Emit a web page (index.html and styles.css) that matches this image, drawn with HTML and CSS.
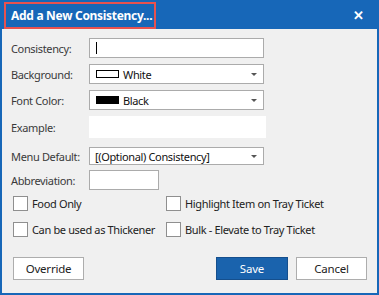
FILE: index.html
```html
<!DOCTYPE html>
<html lang="en">

<head>
    <meta charset="UTF-8">
    <title>Add a New Consistency</title>
    <link rel="stylesheet" href="styles.css">
</head>

<body>
    <div class="window">
        <div class="title-bar">
            <div class="title-text">Add a New Consistency...</div>
            <div class="close-btn">&#x2715;</div>
        </div>

        <div class="dialog-body">
            <div class="form-row row-consistency">
                <label class="field-label">Consistency:</label>
                <div class="text-box wide"><span class="caret"></span></div>
            </div>
            <div class="form-row row-background">
                <label class="field-label">Background:</label>
                <div class="combo wide">
                    <span class="swatch swatch-white"></span>
                    <span class="combo-text">White</span>
                    <span class="combo-arrow"></span>
                </div>
            </div>
            <div class="form-row row-font">
                <label class="field-label">Font Color:</label>
                <div class="combo wide">
                    <span class="swatch swatch-black"></span>
                    <span class="combo-text">Black</span>
                    <span class="combo-arrow"></span>
                </div>
            </div>
            <div class="form-row row-example">
                <label class="field-label">Example:</label>
                <div class="example-box"></div>
            </div>
            <div class="form-row row-menu">
                <label class="field-label">Menu Default:</label>
                <div class="combo wide">
                    <span class="combo-text plain">[(Optional) Consistency]</span>
                    <span class="combo-arrow"></span>
                </div>
            </div>
            <div class="form-row row-abbrev">
                <label class="field-label">Abbreviation:</label>
                <div class="text-box short"></div>
            </div>

            <div class="check-grid">
                <div class="check-item"><span class="check-box"></span>Food Only</div>
                <div class="check-item"><span class="check-box"></span>Highlight Item on Tray Ticket</div>
                <div class="check-item"><span class="check-box"></span>Can be used as Thickener</div>
                <div class="check-item"><span class="check-box"></span>Bulk - Elevate to Tray Ticket</div>
            </div>

            <div class="button-row">
                <button class="btn">Override</button>
                <div class="spacer"></div>
                <button class="btn btn-primary">Save</button>
                <button class="btn">Cancel</button>
            </div>
        </div>
    </div>
</body>

</html>
```

FILE: styles.css
```css
body {
    margin: 0;
    font-family: "Noto Sans", "Open Sans", sans-serif;
    font-size: 11px;
    letter-spacing: -0.35px;
    background-color: #f0f0f0;
}

.window {
    width: 379px;
    height: 295px;
    box-sizing: border-box;
    display: flex;
    flex-direction: column;
    background-color: #1767b8;
}

.title-bar {
    height: 29px;
    display: flex;
    align-items: center;
    color: white;
}

.title-text {
    margin-left: 4px;
    margin-top: 1px;
    height: 27px;
    box-sizing: border-box;
    width: 152px;
    border: 2px solid #e8524f;
    padding-left: 5px;
    display: flex;
    align-items: center;
    white-space: nowrap;
    font-weight: bold;
    font-size: 12px;
    letter-spacing: -0.3px;
}

.close-btn {
    margin-left: auto;
    margin-right: 15px;
    font-size: 13px;
    font-weight: bold;
}

.dialog-body {
    flex: 1;
    margin: 0 2px 2px 2px;
    background-color: #f0f0f0;
    padding: 9px 0 0 9px;
    color: #3a3a3a;
}

.form-row {
    display: flex;
    align-items: center;
    height: 20px;
    margin-bottom: 6px;
}

.row-example {
    height: 22px;
    margin-bottom: 9px;
}

.row-menu {
    height: 18px;
    margin-bottom: 5px;
}

.field-label {
    width: 78px;
    flex-shrink: 0;
}

.text-box,
.combo {
    height: 100%;
    box-sizing: border-box;
    background-color: #fff;
    border: 1px solid #ababab;
    position: relative;
}

.wide {
    width: 175px;
}

.short {
    width: 70px;
}

.caret {
    position: absolute;
    left: 6px;
    top: 3px;
    width: 1px;
    height: 12px;
    background-color: #000;
}

.combo {
    display: flex;
    align-items: center;
    color: #111;
}

.swatch {
    width: 23px;
    height: 8px;
    box-sizing: border-box;
    margin-left: 6px;
    margin-right: 4px;
    border: 1px solid #000;
}

.swatch-white {
    background-color: #fff;
}

.swatch-black {
    background-color: #000;
}

.combo-text.plain {
    margin-left: 5px;
}

.combo-arrow {
    margin-left: auto;
    margin-right: 6px;
    width: 0;
    height: 0;
    border-left: 3px solid transparent;
    border-right: 3px solid transparent;
    border-top: 3px solid #555;
}

.example-box {
    width: 177px;
    height: 100%;
    background-color: #fff;
}

.check-grid {
    display: grid;
    grid-template-columns: 153px auto;
    row-gap: 11px;
    margin-top: 2px;
    margin-left: 2px;
}

.check-item {
    display: flex;
    align-items: center;
    height: 15px;
    color: #222;
}

.check-box {
    width: 15px;
    height: 15px;
    box-sizing: border-box;
    background-color: #fff;
    border: 1px solid #8f8f8f;
    margin-right: 4px;
}

.button-row {
    display: flex;
    margin-top: 20px;
    margin-left: 2px;
    margin-right: 10px;
}

.spacer {
    flex: 1;
}

.btn {
    width: 71px;
    height: 23px;
    font-family: inherit;
    font-size: 11.5px;
    letter-spacing: -0.2px;
    background-color: #fff;
    border: 1px solid #adadad;
    color: #222;
    margin-left: 8px;
    padding: 0;
}

.btn:first-child {
    margin-left: 0;
}

.btn-primary {
    width: 72px;
    background-color: #1a63ad;
    border-color: #154f8d;
    color: #fff;
}
```
